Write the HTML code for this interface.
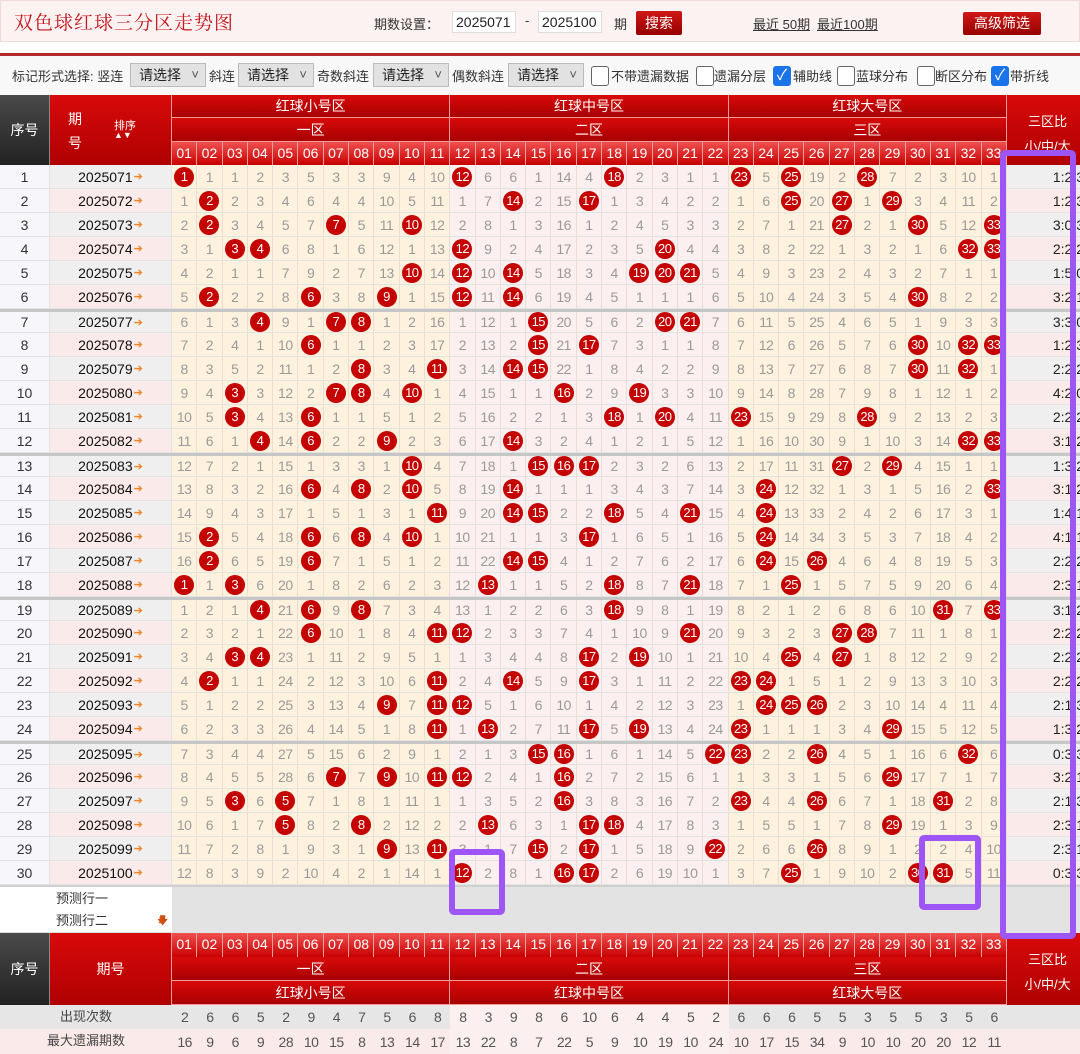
<!DOCTYPE html>
<html><head><meta charset="utf-8">
<style>
*{box-sizing:border-box}
body{margin:0;width:1080px;height:1054px;overflow:hidden;background:#fff;font-family:"Liberation Sans","Noto Sans CJK SC",sans-serif;position:relative;color:#333}
p{margin:0}
.abs{position:absolute}
.top{left:0;top:0;width:1080px;height:42px;background:#fdf2f2;border:1px solid #f0dada}
.title{left:14px;top:8px;font-size:19px;color:#c4161c;font-family:"Noto Serif CJK SC","Noto Sans CJK SC",serif;letter-spacing:1px}
.t13{font-size:13px;color:#333}
.inp{height:22px;top:11px;background:#fff;border:1px solid #ddd;font-size:14px;line-height:20px;padding-left:3px;color:#222}
.btn{background:linear-gradient(#d01818,#960000);color:#fff;font-size:14px;text-align:center;border-radius:2px}
.hr{left:0;top:53px;width:1080px;height:3px;background:#b5292c}
.bar2{left:0;top:56px;width:1080px;height:39px;background:#f8f8f8}
.sel{top:63px;height:24px;width:76px;background:#e2e2e2;border:1px solid #bbb;font-size:14px;line-height:22px;padding-left:8px;color:#222}
.sel:after{content:"˅";position:absolute;right:6px;top:0;font-size:13px;color:#555}
.cb{top:66px;width:18px;height:20px;border:1px solid #666;border-radius:3px;background:#fff}
.cb.on{background:#1a73e8;border-color:#1a73e8;color:#fff;font-size:15px;line-height:18px;text-align:center}
.ft{top:66px;font-size:13px;color:#333}
.dark{background:linear-gradient(#4a4a4a,#222);color:#fff;font-size:14px;display:flex;align-items:center;justify-content:center;border-right:1px solid #888}
.red{background:linear-gradient(#d80a0a,#b00000);color:#fff}
.zrow{display:flex;left:172px;width:835px}
.zrow div{flex:1;min-width:0;text-align:center;color:#fff;font-size:14px;border-right:1px solid #f09a9a;border-bottom:1px solid #f09a9a;background:linear-gradient(#d80a0a,#a80000)}
.nrow{display:flex;left:172px;width:835px;height:23px}
.nrow div{flex:1;min-width:0;text-align:center;color:#fff;font-size:14px;line-height:23px;border-right:1px solid #f5a0a0;background:linear-gradient(#f05050,#c80000)}
#data{left:0;top:165px;width:1080px}
.r{display:flex;height:24px;border-bottom:1px solid #e2e2e2}
.r.sep{border-top:3px solid #c6c6c6}
.sn{width:50px;text-align:center;font-size:14px;background:#f6f6fb;border-right:1px solid #e2e2e2;display:flex;align-items:center;justify-content:center}
.qh{width:122px;text-align:center;font-size:14px;background:#efefef;border-right:1px solid #e2e2e2;display:flex;align-items:center;justify-content:center;color:#111}
.r:nth-child(even) .qh,.r:nth-child(even) .rt{background:#fbeaea}
.qh em{font-style:normal;color:#f08020;font-size:11px;margin-left:1px}
.n{width:835px;display:flex}
.n i{flex:1;min-width:0;font-style:normal;display:flex;align-items:center;justify-content:center;color:#9a9a9a;font-size:14px;background:#fef2df;border-right:1px solid #e8ded2;letter-spacing:-.5px}
.n i:nth-child(n+12):nth-child(-n+22){background:#fcefef}
.n b{display:block;width:20px;height:20px;border-radius:50%;background:#c40000;color:#fff;font-weight:normal;font-size:13px;line-height:20px;text-align:center;letter-spacing:-.5px}
.rt{width:73px;background:#efefef;font-size:14px;display:flex;align-items:center;justify-content:flex-end;overflow:hidden;color:#222}
.rt span{position:relative;left:4px}
.pred{left:0;width:1080px;height:24px;background:#e3e3e3}
.pred p{width:172px;height:24px;background:#fff;border-bottom:1px solid #ddd;font-size:13px;line-height:24px;padding-left:56px;position:relative;color:#333}
.stat{display:flex;left:0;width:1080px;height:24px}
.stat .lb{width:172px;font-size:13px;text-align:center;line-height:24px;color:#444}
.stat .n i{background:transparent;border:none;color:#555}
.pur{border:6px solid #9d55f5;border-radius:5px}
</style></head><body>

<div class="abs top"></div>
<div class="abs title">双色球红球三分区走势图</div>
<div class="abs t13" style="left:374px;top:14px">期数设置：</div>
<div class="abs inp" style="left:452px;width:64px">2025071</div>
<div class="abs t13" style="left:525px;top:13px">-</div>
<div class="abs inp" style="left:538px;width:64px">2025100</div>
<div class="abs t13" style="left:614px;top:14px">期</div>
<div class="abs btn" style="left:636px;top:11px;width:46px;height:24px;line-height:24px">搜索</div>
<div class="abs t13" style="left:753px;top:14px;text-decoration:underline">最近 50期</div>
<div class="abs t13" style="left:817px;top:14px;text-decoration:underline">最近100期</div>
<div class="abs btn" style="left:963px;top:12px;width:78px;height:23px;line-height:23px">高级筛选</div>

<div class="abs hr"></div>
<div class="abs bar2"></div>
<div class="abs ft" style="left:12px">标记形式选择: 竖连</div>
<div class="abs sel" style="left:130px">请选择</div>
<div class="abs ft" style="left:209px">斜连</div>
<div class="abs sel" style="left:238px">请选择</div>
<div class="abs ft" style="left:317px">奇数斜连</div>
<div class="abs sel" style="left:373px">请选择</div>
<div class="abs ft" style="left:452px">偶数斜连</div>
<div class="abs sel" style="left:508px">请选择</div>
<div class="abs cb" style="left:591px"></div>
<div class="abs ft" style="left:611px">不带遗漏数据</div>
<div class="abs cb" style="left:696px"></div>
<div class="abs ft" style="left:714px">遗漏分层</div>
<div class="abs cb on" style="left:773px">✓</div>
<div class="abs ft" style="left:793px">辅助线</div>
<div class="abs cb" style="left:837px"></div>
<div class="abs ft" style="left:856px">蓝球分布</div>
<div class="abs cb" style="left:917px"></div>
<div class="abs ft" style="left:935px">断区分布</div>
<div class="abs cb on" style="left:991px">✓</div>
<div class="abs ft" style="left:1010px">带折线</div>

<!-- top header -->
<div class="abs dark" style="left:0;top:95px;width:50px;height:70px">序号</div>
<div class="abs red" style="left:50px;top:95px;width:122px;height:70px;border-right:1px solid #f09a9a">
  <div class="abs" style="left:18px;top:14px;font-size:14px">期</div>
  <div class="abs" style="left:18px;top:38px;font-size:14px">号</div>
  <div class="abs" style="left:64px;top:22px;font-size:11px">排序</div>
  <div class="abs" style="left:64px;top:35px;font-size:9px">▲▼</div>
</div>
<div class="abs zrow" style="top:95px;height:23px"><div style="line-height:23px">红球小号区</div><div style="line-height:23px">红球中号区</div><div style="line-height:23px">红球大号区</div></div>
<div class="abs zrow" style="top:118px;height:24px"><div style="line-height:24px">一区</div><div style="line-height:24px">二区</div><div style="line-height:24px">三区</div></div>
<div class="abs nrow" style="top:142px"><div>01</div><div>02</div><div>03</div><div>04</div><div>05</div><div>06</div><div>07</div><div>08</div><div>09</div><div>10</div><div>11</div><div>12</div><div>13</div><div>14</div><div>15</div><div>16</div><div>17</div><div>18</div><div>19</div><div>20</div><div>21</div><div>22</div><div>23</div><div>24</div><div>25</div><div>26</div><div>27</div><div>28</div><div>29</div><div>30</div><div>31</div><div>32</div><div>33</div></div>
<div class="abs red" style="left:1007px;top:95px;width:73px;height:70px;font-size:13px;text-align:center;padding-left:8px">
  <div style="margin-top:16px">三区比</div><div style="margin-top:6px">小/中/大</div>
</div>

<div class="abs" id="data">
<div class="r"><p class="sn">1</p><p class="qh">2025071<em>➔</em></p><div class="n"><i><b>1</b></i><i>1</i><i>1</i><i>2</i><i>3</i><i>5</i><i>3</i><i>3</i><i>9</i><i>4</i><i>10</i><i><b>12</b></i><i>6</i><i>6</i><i>1</i><i>14</i><i>4</i><i><b>18</b></i><i>2</i><i>3</i><i>1</i><i>1</i><i><b>23</b></i><i>5</i><i><b>25</b></i><i>19</i><i>2</i><i><b>28</b></i><i>7</i><i>2</i><i>3</i><i>10</i><i>1</i></div><p class="rt"><span>1:2:3</span></p></div>
<div class="r"><p class="sn">2</p><p class="qh">2025072<em>➔</em></p><div class="n"><i>1</i><i><b>2</b></i><i>2</i><i>3</i><i>4</i><i>6</i><i>4</i><i>4</i><i>10</i><i>5</i><i>11</i><i>1</i><i>7</i><i><b>14</b></i><i>2</i><i>15</i><i><b>17</b></i><i>1</i><i>3</i><i>4</i><i>2</i><i>2</i><i>1</i><i>6</i><i><b>25</b></i><i>20</i><i><b>27</b></i><i>1</i><i><b>29</b></i><i>3</i><i>4</i><i>11</i><i>2</i></div><p class="rt"><span>1:2:3</span></p></div>
<div class="r"><p class="sn">3</p><p class="qh">2025073<em>➔</em></p><div class="n"><i>2</i><i><b>2</b></i><i>3</i><i>4</i><i>5</i><i>7</i><i><b>7</b></i><i>5</i><i>11</i><i><b>10</b></i><i>12</i><i>2</i><i>8</i><i>1</i><i>3</i><i>16</i><i>1</i><i>2</i><i>4</i><i>5</i><i>3</i><i>3</i><i>2</i><i>7</i><i>1</i><i>21</i><i><b>27</b></i><i>2</i><i>1</i><i><b>30</b></i><i>5</i><i>12</i><i><b>33</b></i></div><p class="rt"><span>3:0:3</span></p></div>
<div class="r"><p class="sn">4</p><p class="qh">2025074<em>➔</em></p><div class="n"><i>3</i><i>1</i><i><b>3</b></i><i><b>4</b></i><i>6</i><i>8</i><i>1</i><i>6</i><i>12</i><i>1</i><i>13</i><i><b>12</b></i><i>9</i><i>2</i><i>4</i><i>17</i><i>2</i><i>3</i><i>5</i><i><b>20</b></i><i>4</i><i>4</i><i>3</i><i>8</i><i>2</i><i>22</i><i>1</i><i>3</i><i>2</i><i>1</i><i>6</i><i><b>32</b></i><i><b>33</b></i></div><p class="rt"><span>2:2:2</span></p></div>
<div class="r"><p class="sn">5</p><p class="qh">2025075<em>➔</em></p><div class="n"><i>4</i><i>2</i><i>1</i><i>1</i><i>7</i><i>9</i><i>2</i><i>7</i><i>13</i><i><b>10</b></i><i>14</i><i><b>12</b></i><i>10</i><i><b>14</b></i><i>5</i><i>18</i><i>3</i><i>4</i><i><b>19</b></i><i><b>20</b></i><i><b>21</b></i><i>5</i><i>4</i><i>9</i><i>3</i><i>23</i><i>2</i><i>4</i><i>3</i><i>2</i><i>7</i><i>1</i><i>1</i></div><p class="rt"><span>1:5:0</span></p></div>
<div class="r"><p class="sn">6</p><p class="qh">2025076<em>➔</em></p><div class="n"><i>5</i><i><b>2</b></i><i>2</i><i>2</i><i>8</i><i><b>6</b></i><i>3</i><i>8</i><i><b>9</b></i><i>1</i><i>15</i><i><b>12</b></i><i>11</i><i><b>14</b></i><i>6</i><i>19</i><i>4</i><i>5</i><i>1</i><i>1</i><i>1</i><i>6</i><i>5</i><i>10</i><i>4</i><i>24</i><i>3</i><i>5</i><i>4</i><i><b>30</b></i><i>8</i><i>2</i><i>2</i></div><p class="rt"><span>3:2:1</span></p></div>
<div class="r sep"><p class="sn">7</p><p class="qh">2025077<em>➔</em></p><div class="n"><i>6</i><i>1</i><i>3</i><i><b>4</b></i><i>9</i><i>1</i><i><b>7</b></i><i><b>8</b></i><i>1</i><i>2</i><i>16</i><i>1</i><i>12</i><i>1</i><i><b>15</b></i><i>20</i><i>5</i><i>6</i><i>2</i><i><b>20</b></i><i><b>21</b></i><i>7</i><i>6</i><i>11</i><i>5</i><i>25</i><i>4</i><i>6</i><i>5</i><i>1</i><i>9</i><i>3</i><i>3</i></div><p class="rt"><span>3:3:0</span></p></div>
<div class="r"><p class="sn">8</p><p class="qh">2025078<em>➔</em></p><div class="n"><i>7</i><i>2</i><i>4</i><i>1</i><i>10</i><i><b>6</b></i><i>1</i><i>1</i><i>2</i><i>3</i><i>17</i><i>2</i><i>13</i><i>2</i><i><b>15</b></i><i>21</i><i><b>17</b></i><i>7</i><i>3</i><i>1</i><i>1</i><i>8</i><i>7</i><i>12</i><i>6</i><i>26</i><i>5</i><i>7</i><i>6</i><i><b>30</b></i><i>10</i><i><b>32</b></i><i><b>33</b></i></div><p class="rt"><span>1:2:3</span></p></div>
<div class="r"><p class="sn">9</p><p class="qh">2025079<em>➔</em></p><div class="n"><i>8</i><i>3</i><i>5</i><i>2</i><i>11</i><i>1</i><i>2</i><i><b>8</b></i><i>3</i><i>4</i><i><b>11</b></i><i>3</i><i>14</i><i><b>14</b></i><i><b>15</b></i><i>22</i><i>1</i><i>8</i><i>4</i><i>2</i><i>2</i><i>9</i><i>8</i><i>13</i><i>7</i><i>27</i><i>6</i><i>8</i><i>7</i><i><b>30</b></i><i>11</i><i><b>32</b></i><i>1</i></div><p class="rt"><span>2:2:2</span></p></div>
<div class="r"><p class="sn">10</p><p class="qh">2025080<em>➔</em></p><div class="n"><i>9</i><i>4</i><i><b>3</b></i><i>3</i><i>12</i><i>2</i><i><b>7</b></i><i><b>8</b></i><i>4</i><i><b>10</b></i><i>1</i><i>4</i><i>15</i><i>1</i><i>1</i><i><b>16</b></i><i>2</i><i>9</i><i><b>19</b></i><i>3</i><i>3</i><i>10</i><i>9</i><i>14</i><i>8</i><i>28</i><i>7</i><i>9</i><i>8</i><i>1</i><i>12</i><i>1</i><i>2</i></div><p class="rt"><span>4:2:0</span></p></div>
<div class="r"><p class="sn">11</p><p class="qh">2025081<em>➔</em></p><div class="n"><i>10</i><i>5</i><i><b>3</b></i><i>4</i><i>13</i><i><b>6</b></i><i>1</i><i>1</i><i>5</i><i>1</i><i>2</i><i>5</i><i>16</i><i>2</i><i>2</i><i>1</i><i>3</i><i><b>18</b></i><i>1</i><i><b>20</b></i><i>4</i><i>11</i><i><b>23</b></i><i>15</i><i>9</i><i>29</i><i>8</i><i><b>28</b></i><i>9</i><i>2</i><i>13</i><i>2</i><i>3</i></div><p class="rt"><span>2:2:2</span></p></div>
<div class="r"><p class="sn">12</p><p class="qh">2025082<em>➔</em></p><div class="n"><i>11</i><i>6</i><i>1</i><i><b>4</b></i><i>14</i><i><b>6</b></i><i>2</i><i>2</i><i><b>9</b></i><i>2</i><i>3</i><i>6</i><i>17</i><i><b>14</b></i><i>3</i><i>2</i><i>4</i><i>1</i><i>2</i><i>1</i><i>5</i><i>12</i><i>1</i><i>16</i><i>10</i><i>30</i><i>9</i><i>1</i><i>10</i><i>3</i><i>14</i><i><b>32</b></i><i><b>33</b></i></div><p class="rt"><span>3:1:2</span></p></div>
<div class="r sep"><p class="sn">13</p><p class="qh">2025083<em>➔</em></p><div class="n"><i>12</i><i>7</i><i>2</i><i>1</i><i>15</i><i>1</i><i>3</i><i>3</i><i>1</i><i><b>10</b></i><i>4</i><i>7</i><i>18</i><i>1</i><i><b>15</b></i><i><b>16</b></i><i><b>17</b></i><i>2</i><i>3</i><i>2</i><i>6</i><i>13</i><i>2</i><i>17</i><i>11</i><i>31</i><i><b>27</b></i><i>2</i><i><b>29</b></i><i>4</i><i>15</i><i>1</i><i>1</i></div><p class="rt"><span>1:3:2</span></p></div>
<div class="r"><p class="sn">14</p><p class="qh">2025084<em>➔</em></p><div class="n"><i>13</i><i>8</i><i>3</i><i>2</i><i>16</i><i><b>6</b></i><i>4</i><i><b>8</b></i><i>2</i><i><b>10</b></i><i>5</i><i>8</i><i>19</i><i><b>14</b></i><i>1</i><i>1</i><i>1</i><i>3</i><i>4</i><i>3</i><i>7</i><i>14</i><i>3</i><i><b>24</b></i><i>12</i><i>32</i><i>1</i><i>3</i><i>1</i><i>5</i><i>16</i><i>2</i><i><b>33</b></i></div><p class="rt"><span>3:1:2</span></p></div>
<div class="r"><p class="sn">15</p><p class="qh">2025085<em>➔</em></p><div class="n"><i>14</i><i>9</i><i>4</i><i>3</i><i>17</i><i>1</i><i>5</i><i>1</i><i>3</i><i>1</i><i><b>11</b></i><i>9</i><i>20</i><i><b>14</b></i><i><b>15</b></i><i>2</i><i>2</i><i><b>18</b></i><i>5</i><i>4</i><i><b>21</b></i><i>15</i><i>4</i><i><b>24</b></i><i>13</i><i>33</i><i>2</i><i>4</i><i>2</i><i>6</i><i>17</i><i>3</i><i>1</i></div><p class="rt"><span>1:4:1</span></p></div>
<div class="r"><p class="sn">16</p><p class="qh">2025086<em>➔</em></p><div class="n"><i>15</i><i><b>2</b></i><i>5</i><i>4</i><i>18</i><i><b>6</b></i><i>6</i><i><b>8</b></i><i>4</i><i><b>10</b></i><i>1</i><i>10</i><i>21</i><i>1</i><i>1</i><i>3</i><i><b>17</b></i><i>1</i><i>6</i><i>5</i><i>1</i><i>16</i><i>5</i><i><b>24</b></i><i>14</i><i>34</i><i>3</i><i>5</i><i>3</i><i>7</i><i>18</i><i>4</i><i>2</i></div><p class="rt"><span>4:1:1</span></p></div>
<div class="r"><p class="sn">17</p><p class="qh">2025087<em>➔</em></p><div class="n"><i>16</i><i><b>2</b></i><i>6</i><i>5</i><i>19</i><i><b>6</b></i><i>7</i><i>1</i><i>5</i><i>1</i><i>2</i><i>11</i><i>22</i><i><b>14</b></i><i><b>15</b></i><i>4</i><i>1</i><i>2</i><i>7</i><i>6</i><i>2</i><i>17</i><i>6</i><i><b>24</b></i><i>15</i><i><b>26</b></i><i>4</i><i>6</i><i>4</i><i>8</i><i>19</i><i>5</i><i>3</i></div><p class="rt"><span>2:2:2</span></p></div>
<div class="r"><p class="sn">18</p><p class="qh">2025088<em>➔</em></p><div class="n"><i><b>1</b></i><i>1</i><i><b>3</b></i><i>6</i><i>20</i><i>1</i><i>8</i><i>2</i><i>6</i><i>2</i><i>3</i><i>12</i><i><b>13</b></i><i>1</i><i>1</i><i>5</i><i>2</i><i><b>18</b></i><i>8</i><i>7</i><i><b>21</b></i><i>18</i><i>7</i><i>1</i><i><b>25</b></i><i>1</i><i>5</i><i>7</i><i>5</i><i>9</i><i>20</i><i>6</i><i>4</i></div><p class="rt"><span>2:3:1</span></p></div>
<div class="r sep"><p class="sn">19</p><p class="qh">2025089<em>➔</em></p><div class="n"><i>1</i><i>2</i><i>1</i><i><b>4</b></i><i>21</i><i><b>6</b></i><i>9</i><i><b>8</b></i><i>7</i><i>3</i><i>4</i><i>13</i><i>1</i><i>2</i><i>2</i><i>6</i><i>3</i><i><b>18</b></i><i>9</i><i>8</i><i>1</i><i>19</i><i>8</i><i>2</i><i>1</i><i>2</i><i>6</i><i>8</i><i>6</i><i>10</i><i><b>31</b></i><i>7</i><i><b>33</b></i></div><p class="rt"><span>3:1:2</span></p></div>
<div class="r"><p class="sn">20</p><p class="qh">2025090<em>➔</em></p><div class="n"><i>2</i><i>3</i><i>2</i><i>1</i><i>22</i><i><b>6</b></i><i>10</i><i>1</i><i>8</i><i>4</i><i><b>11</b></i><i><b>12</b></i><i>2</i><i>3</i><i>3</i><i>7</i><i>4</i><i>1</i><i>10</i><i>9</i><i><b>21</b></i><i>20</i><i>9</i><i>3</i><i>2</i><i>3</i><i><b>27</b></i><i><b>28</b></i><i>7</i><i>11</i><i>1</i><i>8</i><i>1</i></div><p class="rt"><span>2:2:2</span></p></div>
<div class="r"><p class="sn">21</p><p class="qh">2025091<em>➔</em></p><div class="n"><i>3</i><i>4</i><i><b>3</b></i><i><b>4</b></i><i>23</i><i>1</i><i>11</i><i>2</i><i>9</i><i>5</i><i>1</i><i>1</i><i>3</i><i>4</i><i>4</i><i>8</i><i><b>17</b></i><i>2</i><i><b>19</b></i><i>10</i><i>1</i><i>21</i><i>10</i><i>4</i><i><b>25</b></i><i>4</i><i><b>27</b></i><i>1</i><i>8</i><i>12</i><i>2</i><i>9</i><i>2</i></div><p class="rt"><span>2:2:2</span></p></div>
<div class="r"><p class="sn">22</p><p class="qh">2025092<em>➔</em></p><div class="n"><i>4</i><i><b>2</b></i><i>1</i><i>1</i><i>24</i><i>2</i><i>12</i><i>3</i><i>10</i><i>6</i><i><b>11</b></i><i>2</i><i>4</i><i><b>14</b></i><i>5</i><i>9</i><i><b>17</b></i><i>3</i><i>1</i><i>11</i><i>2</i><i>22</i><i><b>23</b></i><i><b>24</b></i><i>1</i><i>5</i><i>1</i><i>2</i><i>9</i><i>13</i><i>3</i><i>10</i><i>3</i></div><p class="rt"><span>2:2:2</span></p></div>
<div class="r"><p class="sn">23</p><p class="qh">2025093<em>➔</em></p><div class="n"><i>5</i><i>1</i><i>2</i><i>2</i><i>25</i><i>3</i><i>13</i><i>4</i><i><b>9</b></i><i>7</i><i><b>11</b></i><i><b>12</b></i><i>5</i><i>1</i><i>6</i><i>10</i><i>1</i><i>4</i><i>2</i><i>12</i><i>3</i><i>23</i><i>1</i><i><b>24</b></i><i><b>25</b></i><i><b>26</b></i><i>2</i><i>3</i><i>10</i><i>14</i><i>4</i><i>11</i><i>4</i></div><p class="rt"><span>2:1:3</span></p></div>
<div class="r"><p class="sn">24</p><p class="qh">2025094<em>➔</em></p><div class="n"><i>6</i><i>2</i><i>3</i><i>3</i><i>26</i><i>4</i><i>14</i><i>5</i><i>1</i><i>8</i><i><b>11</b></i><i>1</i><i><b>13</b></i><i>2</i><i>7</i><i>11</i><i><b>17</b></i><i>5</i><i><b>19</b></i><i>13</i><i>4</i><i>24</i><i><b>23</b></i><i>1</i><i>1</i><i>1</i><i>3</i><i>4</i><i><b>29</b></i><i>15</i><i>5</i><i>12</i><i>5</i></div><p class="rt"><span>1:3:2</span></p></div>
<div class="r sep"><p class="sn">25</p><p class="qh">2025095<em>➔</em></p><div class="n"><i>7</i><i>3</i><i>4</i><i>4</i><i>27</i><i>5</i><i>15</i><i>6</i><i>2</i><i>9</i><i>1</i><i>2</i><i>1</i><i>3</i><i><b>15</b></i><i><b>16</b></i><i>1</i><i>6</i><i>1</i><i>14</i><i>5</i><i><b>22</b></i><i><b>23</b></i><i>2</i><i>2</i><i><b>26</b></i><i>4</i><i>5</i><i>1</i><i>16</i><i>6</i><i><b>32</b></i><i>6</i></div><p class="rt"><span>0:3:3</span></p></div>
<div class="r"><p class="sn">26</p><p class="qh">2025096<em>➔</em></p><div class="n"><i>8</i><i>4</i><i>5</i><i>5</i><i>28</i><i>6</i><i><b>7</b></i><i>7</i><i><b>9</b></i><i>10</i><i><b>11</b></i><i><b>12</b></i><i>2</i><i>4</i><i>1</i><i><b>16</b></i><i>2</i><i>7</i><i>2</i><i>15</i><i>6</i><i>1</i><i>1</i><i>3</i><i>3</i><i>1</i><i>5</i><i>6</i><i><b>29</b></i><i>17</i><i>7</i><i>1</i><i>7</i></div><p class="rt"><span>3:2:1</span></p></div>
<div class="r"><p class="sn">27</p><p class="qh">2025097<em>➔</em></p><div class="n"><i>9</i><i>5</i><i><b>3</b></i><i>6</i><i><b>5</b></i><i>7</i><i>1</i><i>8</i><i>1</i><i>11</i><i>1</i><i>1</i><i>3</i><i>5</i><i>2</i><i><b>16</b></i><i>3</i><i>8</i><i>3</i><i>16</i><i>7</i><i>2</i><i><b>23</b></i><i>4</i><i>4</i><i><b>26</b></i><i>6</i><i>7</i><i>1</i><i>18</i><i><b>31</b></i><i>2</i><i>8</i></div><p class="rt"><span>2:1:3</span></p></div>
<div class="r"><p class="sn">28</p><p class="qh">2025098<em>➔</em></p><div class="n"><i>10</i><i>6</i><i>1</i><i>7</i><i><b>5</b></i><i>8</i><i>2</i><i><b>8</b></i><i>2</i><i>12</i><i>2</i><i>2</i><i><b>13</b></i><i>6</i><i>3</i><i>1</i><i><b>17</b></i><i><b>18</b></i><i>4</i><i>17</i><i>8</i><i>3</i><i>1</i><i>5</i><i>5</i><i>1</i><i>7</i><i>8</i><i><b>29</b></i><i>19</i><i>1</i><i>3</i><i>9</i></div><p class="rt"><span>2:3:1</span></p></div>
<div class="r"><p class="sn">29</p><p class="qh">2025099<em>➔</em></p><div class="n"><i>11</i><i>7</i><i>2</i><i>8</i><i>1</i><i>9</i><i>3</i><i>1</i><i><b>9</b></i><i>13</i><i><b>11</b></i><i>3</i><i>1</i><i>7</i><i><b>15</b></i><i>2</i><i><b>17</b></i><i>1</i><i>5</i><i>18</i><i>9</i><i><b>22</b></i><i>2</i><i>6</i><i>6</i><i><b>26</b></i><i>8</i><i>9</i><i>1</i><i>2</i><i>2</i><i>4</i><i>10</i></div><p class="rt"><span>2:3:1</span></p></div>
<div class="r"><p class="sn">30</p><p class="qh">2025100<em>➔</em></p><div class="n"><i>12</i><i>8</i><i>3</i><i>9</i><i>2</i><i>10</i><i>4</i><i>2</i><i>1</i><i>14</i><i>1</i><i><b>12</b></i><i>2</i><i>8</i><i>1</i><i><b>16</b></i><i><b>17</b></i><i>2</i><i>6</i><i>19</i><i>10</i><i>1</i><i>3</i><i>7</i><i><b>25</b></i><i>1</i><i>9</i><i>10</i><i>2</i><i><b>30</b></i><i><b>31</b></i><i>5</i><i>11</i></div><p class="rt"><span>0:3:3</span></p></div>
</div>

<!-- prediction rows -->
<div class="abs pred" style="top:885px;border-top:2px solid #d0d0d0"><p>预测行一</p></div>
<div class="abs pred" style="top:909px"><p>预测行二<span style="position:absolute;left:157px;top:0;color:#d05010;font-size:11px">🡇</span><span style="position:absolute;left:157px;top:-2px;color:#d05010;font-size:12px">↓</span></p></div>

<!-- bottom header -->
<div class="abs dark" style="left:0;top:933px;width:50px;height:72px">序号</div>
<div class="abs red" style="left:50px;top:933px;width:122px;height:72px;font-size:14px;display:flex;align-items:center;justify-content:center;border-right:1px solid #f09a9a">期号</div>
<div class="abs nrow" style="top:933px;height:24px"><div>01</div><div>02</div><div>03</div><div>04</div><div>05</div><div>06</div><div>07</div><div>08</div><div>09</div><div>10</div><div>11</div><div>12</div><div>13</div><div>14</div><div>15</div><div>16</div><div>17</div><div>18</div><div>19</div><div>20</div><div>21</div><div>22</div><div>23</div><div>24</div><div>25</div><div>26</div><div>27</div><div>28</div><div>29</div><div>30</div><div>31</div><div>32</div><div>33</div></div>
<div class="abs zrow" style="top:957px;height:24px"><div style="line-height:24px">一区</div><div style="line-height:24px">二区</div><div style="line-height:24px">三区</div></div>
<div class="abs zrow" style="top:981px;height:24px"><div style="line-height:24px">红球小号区</div><div style="line-height:24px">红球中号区</div><div style="line-height:24px">红球大号区</div></div>
<div class="abs red" style="left:1007px;top:933px;width:73px;height:72px;font-size:13px;text-align:center;padding-left:8px">
  <div style="margin-top:16px">三区比</div><div style="margin-top:6px">小/中/大</div>
</div>

<!-- stats -->
<div class="abs stat" style="top:1005px;background:#e6e6e6"><p class="lb">出现次数</p><div class="n"><i>2</i><i>6</i><i>6</i><i>5</i><i>2</i><i>9</i><i>4</i><i>7</i><i>5</i><i>6</i><i>8</i><i>8</i><i>3</i><i>9</i><i>8</i><i>6</i><i>10</i><i>6</i><i>4</i><i>4</i><i>5</i><i>2</i><i>6</i><i>6</i><i>6</i><i>5</i><i>5</i><i>3</i><i>5</i><i>5</i><i>3</i><i>5</i><i>6</i></div></div>
<div class="abs stat" style="top:1029px;height:25px;background:#fbeaea"><p class="lb">最大遗漏期数</p><div class="n"><i>16</i><i>9</i><i>6</i><i>9</i><i>28</i><i>10</i><i>15</i><i>8</i><i>13</i><i>14</i><i>17</i><i>13</i><i>22</i><i>8</i><i>7</i><i>22</i><i>5</i><i>9</i><i>10</i><i>19</i><i>10</i><i>24</i><i>10</i><i>17</i><i>15</i><i>34</i><i>9</i><i>10</i><i>10</i><i>20</i><i>20</i><i>12</i><i>11</i></div></div>

<!-- purple highlight overlays -->
<div class="abs pur" style="left:1000px;top:150px;width:76px;height:789px"></div>
<div class="abs pur" style="left:449px;top:849px;width:56px;height:66px"></div>
<div class="abs pur" style="left:919px;top:835px;width:62px;height:75px"></div>
</body></html>
